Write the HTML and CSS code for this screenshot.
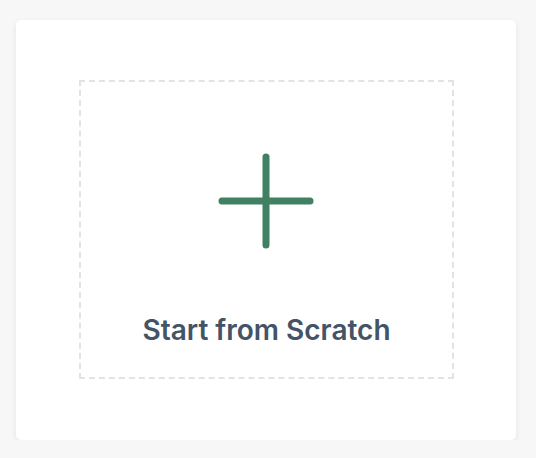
FILE: index.html
```html
<!DOCTYPE html>
<html>
<head>
<meta charset="utf-8">
<link rel="stylesheet" href="styles.css">
</head>
<body>
  <div class="card">
    <div class="dropzone">
      <svg class="plus" width="96" height="96" viewBox="0 0 96 96" aria-hidden="true">
        <line x1="48" y1="4" x2="48" y2="92" />
        <line x1="4" y1="48" x2="92" y2="48" />
      </svg>
      <div class="label">Start from Scratch</div>
    </div>
  </div>
</body>
</html>
```

FILE: styles.css
```css
html, body {
  margin: 0;
  padding: 0;
  background: #f7f7f7;
}
body {
  padding: 20px 0 0 16px;
  font-family: Inter, "Noto Sans", sans-serif;
}
.card {
  box-sizing: border-box;
  width: 500px;
  height: 420px;
  background: #ffffff;
  border-radius: 5px;
  box-shadow: 0 2px 6px rgba(0, 0, 0, 0.08);
  padding: 60px 62px 61px 63px;
}
.dropzone {
  box-sizing: border-box;
  height: 299px;
  border: 2px dashed #e3e3e3;
  display: flex;
  flex-direction: column;
  align-items: center;
  padding-top: 71px;
}
.plus {
  display: block;
  margin-left: -1px;
}
.plus line {
  stroke: #418062;
  stroke-width: 7;
  stroke-linecap: round;
}
.label {
  margin-top: 66px;
  font-size: 28px;
  font-weight: 600;
  color: #435466;
  line-height: 30px;
}
```
